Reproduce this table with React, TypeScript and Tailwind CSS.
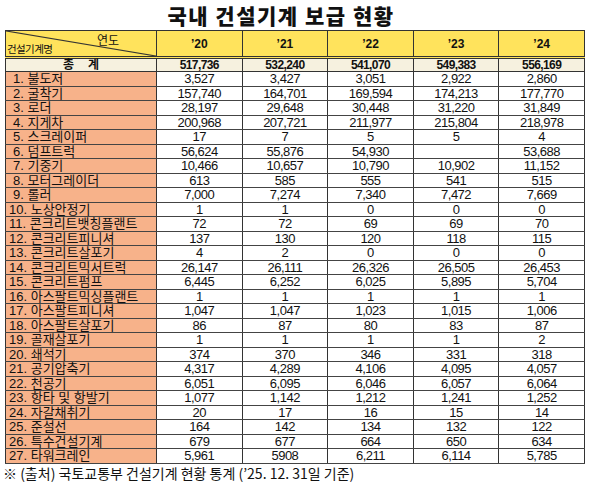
import React from "react";

const rows: [string, string[]][] = [
  ["1. 불도저", ["3,527", "3,427", "3,051", "2,922", "2,860"]],
  ["2. 굴착기", ["157,740", "164,701", "169,594", "174,213", "177,770"]],
  ["3. 로더", ["28,197", "29,648", "30,448", "31,220", "31,849"]],
  ["4. 지게차", ["200,968", "207,721", "211,977", "215,804", "218,978"]],
  ["5. 스크레이퍼", ["17", "7", "5", "5", "4"]],
  ["6. 덤프트럭", ["56,624", "55,876", "54,930", "", "53,688"]],
  ["7. 기중기", ["10,466", "10,657", "10,790", "10,902", "11,152"]],
  ["8. 모터그레이더", ["613", "585", "555", "541", "515"]],
  ["9. 롤러", ["7,000", "7,274", "7,340", "7,472", "7,669"]],
  ["10. 노상안정기", ["1", "1", "0", "0", "0"]],
  ["11. 콘크리트뱃칭플랜트", ["72", "72", "69", "69", "70"]],
  ["12. 콘크리트피니셔", ["137", "130", "120", "118", "115"]],
  ["13. 콘크리트살포기", ["4", "2", "0", "0", "0"]],
  ["14. 콘크리트믹서트럭", ["26,147", "26,111", "26,326", "26,505", "26,453"]],
  ["15. 콘크리트펌프", ["6,445", "6,252", "6,025", "5,895", "5,704"]],
  ["16. 아스팔트믹싱플랜트", ["1", "1", "1", "1", "1"]],
  ["17. 아스팔트피니셔", ["1,047", "1,047", "1,023", "1,015", "1,006"]],
  ["18. 아스팔트살포기", ["86", "87", "80", "83", "87"]],
  ["19. 골재살포기", ["1", "1", "1", "1", "2"]],
  ["20. 쇄석기", ["374", "370", "346", "331", "318"]],
  ["21. 공기압축기", ["4,317", "4,289", "4,106", "4,095", "4,057"]],
  ["22. 천공기", ["6,051", "6,095", "6,046", "6,057", "6,064"]],
  ["23. 항타 및 항발기", ["1,077", "1,142", "1,212", "1,241", "1,252"]],
  ["24. 자갈채취기", ["20", "17", "16", "15", "14"]],
  ["25. 준설선", ["164", "142", "134", "132", "122"]],
  ["26. 특수건설기계", ["679", "677", "664", "650", "634"]],
  ["27. 타워크레인", ["5,961", "5908", "6,211", "6,114", "5,785"]],
];

const years = ["’20", "’21", "’22", "’23", "’24"];
const totals = ["517,736", "532,240", "541,070", "549,383", "556,169"];

const grid = "grid grid-cols-[152px_repeat(5,85.6px)]";
const cellFont = { fontFamily: '"Liberation Sans", "Noto Sans CJK KR", sans-serif' };

export default function App() {
  return (
    <div
      className="w-[600px] h-[488px] bg-white text-[#111] overflow-hidden"
      style={{ fontFamily: '"Noto Sans CJK KR", "Noto Sans", sans-serif' }}
    >
      <div className="h-[30px] flex items-center justify-center pr-[38px] text-[21px] font-black tracking-[1.5px] text-[#111] leading-none">
        국내 건설기계 보급 현황
      </div>

      <div className="ml-[5px] w-[580px] border-t border-[#333]" style={cellFont}>
        {/* header */}
        <div className={`${grid} h-[28px] bg-[#ffe35c] border-b-[3px] border-double border-[#333]`}>
          <div className="relative border-x border-[#333] leading-none">
            <svg className="absolute inset-0" width="100%" height="100%" preserveAspectRatio="none" viewBox="0 0 100 100">
              <line x1="0" y1="0" x2="100" y2="100" stroke="#333" strokeWidth="1.2" vectorEffect="non-scaling-stroke" />
            </svg>
            <span className="absolute left-[91px] top-[4px] text-[12px]">연도</span>
            <span className="absolute left-[1px] bottom-[2px] text-[10.5px] tracking-[-0.6px]">건설기계명</span>
          </div>
          {years.map((y) => (
            <div key={y} className="flex items-center justify-center border-r border-[#333] text-[12px] font-bold leading-none">
              {y}
            </div>
          ))}
        </div>

        {/* total */}
        <div className={`${grid} h-[13px] bg-[#f6f1df] border-b border-[#333] text-[12px] leading-none`}>
          <div className="flex items-center justify-center border-x border-[#333] font-bold tracking-[14px] pl-[14px]">
            총계
          </div>
          {totals.map((t, i) => (
            <div key={i} className="flex items-center justify-center border-r border-[#333] font-bold tracking-[-0.6px]">
              {t}
            </div>
          ))}
        </div>

        {/* rows */}
        {rows.map(([name, vals], idx) => (
          <div key={name} className={`${grid} h-[14.5px] border-b border-[#444] text-[13px] leading-none`}>
            <div
              className={`flex items-center bg-[#f7b28a] border-x border-[#333] whitespace-nowrap ${
                idx < 9 ? "pl-[7px]" : "pl-[3px]"
              }`}
            >
              {name}
            </div>
            {vals.map((v, i) => (
              <div key={i} className="flex items-center justify-center border-r border-[#333] tracking-[-0.5px]">
                {v}
              </div>
            ))}
          </div>
        ))}
      </div>

      <div className="pl-[3px] pt-[2px] text-[14px] leading-none whitespace-nowrap">
        ※ (출처) 국토교통부 건설기계 현황 통계 (’25. 12. 31일 기준)
      </div>
    </div>
  );
}
